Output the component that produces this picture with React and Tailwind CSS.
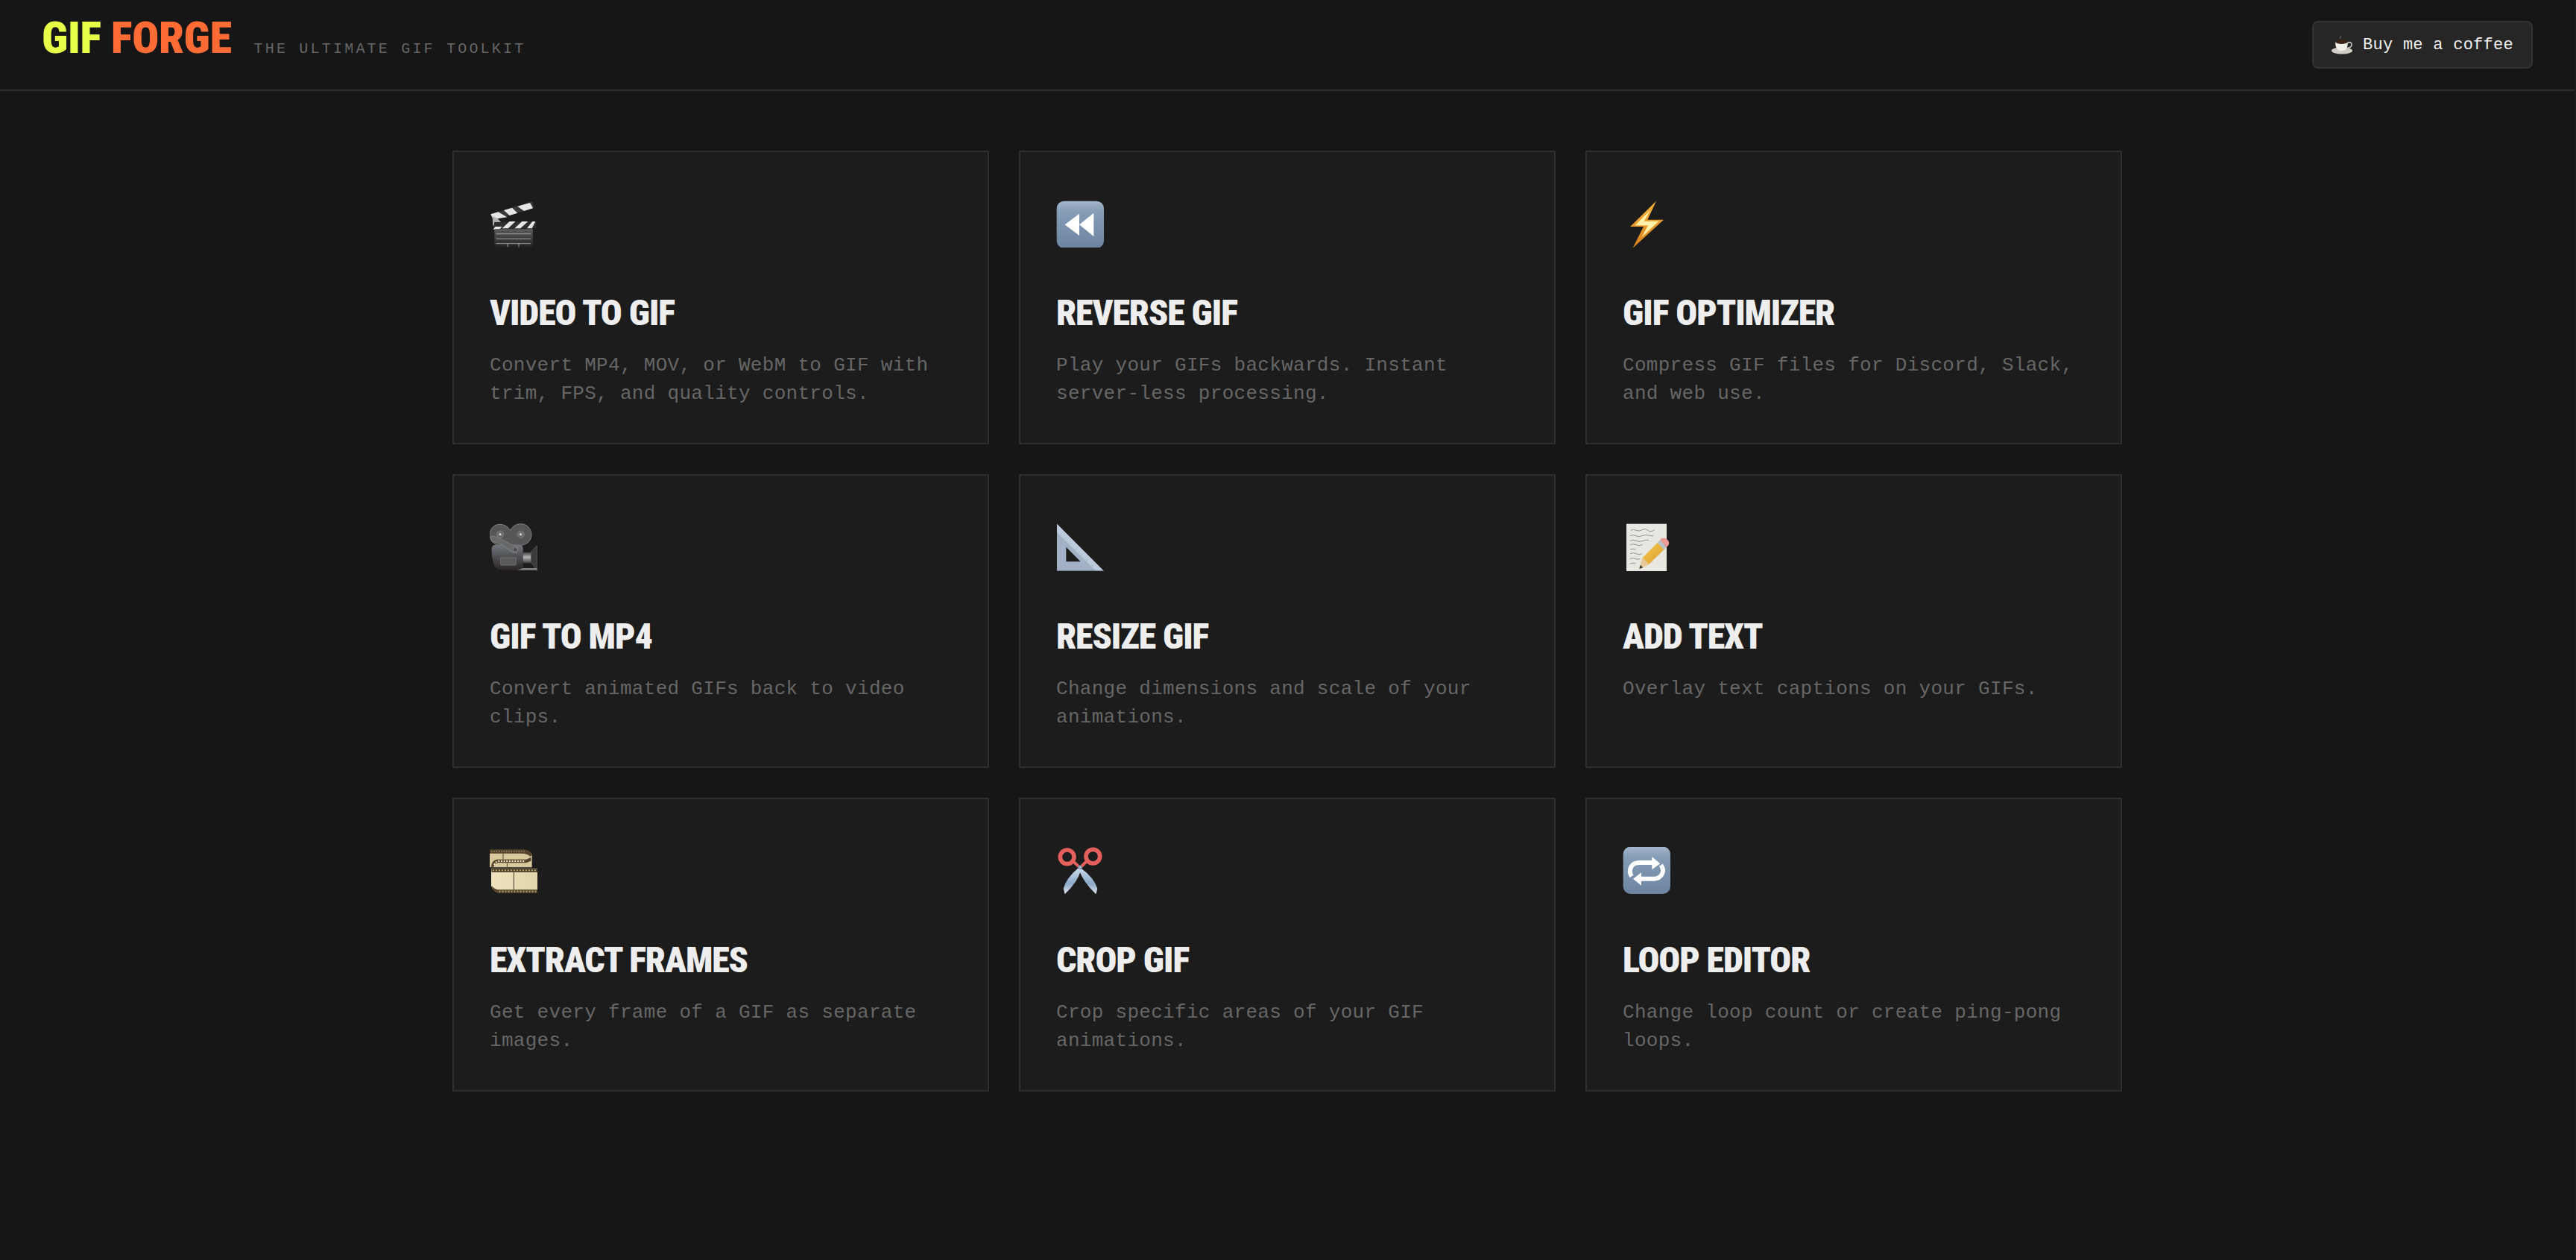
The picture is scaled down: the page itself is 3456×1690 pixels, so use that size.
const display = "font-['Roboto','Open_Sans',sans-serif] font-black font-stretch-condensed";
const mono = "font-['Liberation_Mono',monospace]";

function ClapperIcon() {
  return (
    <>
      <defs>
        <linearGradient id="clapBody" x1="0" y1="0" x2="0" y2="1">
          <stop offset="0" stopColor="#5c5c5c" />
          <stop offset="1" stopColor="#1f1f1f" />
        </linearGradient>
      </defs>
      <path d="M82 108 L250 57 L256 82 L120 124 L92 145 Z" fill="#3a3a3a" />
      <path d="M82 108 L112 99 L148 120 L92 128 Z" fill="#e6e6e6" />
      <path d="M135 92 L168 82 L190 103 L158 113 Z M190 76 L240 62 L252 84 L216 95 Z" fill="#e6e6e6" />
      <path d="M90 115 L112 128 L134 150 L100 170 L90 150 Z" fill="#b0b0b0" />
      <path d="M97 140 L265 136 L266 165 L92 170 Z" fill="#2e2e2e" />
      <path d="M128 165 L158 137 L182 137 L152 165 Z M178 165 L208 137 L232 137 L202 165 Z M228 165 L250 137 L262 137 L248 165 Z M92 170 L100 158 L128 158 L118 168 Z" fill="#e6e6e6" />
      <path d="M97 168 H252 V228 Q252 242 238 242 H111 Q97 242 97 228 Z" fill="url(#clapBody)" />
      <path d="M104 187 H243 M104 207 H243 M104 226 H243 M150 226 V240 M195 226 V240" stroke="#b4b4b4" strokeWidth="2.5" fill="none" />
    </>
  );
}

function RewindIcon() {
  return (
    <>
      <defs>
        <linearGradient id="btnBlue" x1="0" y1="0" x2="0" y2="1">
          <stop offset="0" stopColor="#a3b6cb" />
          <stop offset="0.22" stopColor="#869db7" />
          <stop offset="1" stopColor="#6c84a1" />
        </linearGradient>
      </defs>
      <rect x="80" y="55" width="190" height="190" rx="30" fill="url(#btnBlue)" />
      <path d="M113 150 L171 106 V194 Z M171 150 L229 103 V197 Z" fill="#fff" />
    </>
  );
}

function BoltIcon() {
  return (
    <>
      <defs>
        <linearGradient id="boltFill" x1="0" y1="0" x2="0" y2="1">
          <stop offset="0" stopColor="#f5b13d" />
          <stop offset="1" stopColor="#d9821c" />
        </linearGradient>
      </defs>
      <path d="M213 55 L108 158 H162 L118 245 L243 130 H178 Z" fill="url(#boltFill)" />
      <path d="M189 92 L128 153 H180 L155 200 L223 136 H164 Z" fill="#fff2a8" />
    </>
  );
}

function CameraIcon() {
  return (
    <>
      <defs>
        <linearGradient id="camBody" x1="0" y1="0" x2="0" y2="1">
          <stop offset="0" stopColor="#70767c" />
          <stop offset="1" stopColor="#2b2527" />
        </linearGradient>
        <linearGradient id="camLens" x1="0" y1="0" x2="0" y2="1">
          <stop offset="0" stopColor="#3a3a3a" />
          <stop offset="0.45" stopColor="#b5b5b5" />
          <stop offset="1" stopColor="#3a3a3a" />
        </linearGradient>
      </defs>
      <path d="M118 54 C142 54 155 68 160 78 C166 66 182 52 203 52 C228 52 246 72 246 96 C246 118 228 138 200 138 H120 C96 138 78 118 78 96 C78 72 96 54 118 54 Z" fill="#565656" stroke="#8e8e8e" strokeWidth="2.5" />
      <circle cx="120" cy="94" r="14" fill="#6a6a6a" stroke="#8a8a8a" strokeWidth="2" />
      <circle cx="120" cy="94" r="5" fill="#cfcfcf" />
      <circle cx="203" cy="94" r="14" fill="#6a6a6a" stroke="#8a8a8a" strokeWidth="2" />
      <circle cx="203" cy="94" r="5" fill="#cfcfcf" />
      <path d="M100 136 H196 Q212 136 212 152 V226 Q212 238 198 238 H125 Q100 238 93 212 Q84 178 86 150 Q88 136 100 136 Z" fill="url(#camBody)" />
      <path d="M82 104 L92 100 L130 116 L192 148 L186 168 L170 166 L118 130 L86 122 Z" fill="#68696b" stroke="#9a9a9a" strokeWidth="1.5" />
      <circle cx="181" cy="156" r="9" fill="#4a4a4a" stroke="#999" strokeWidth="2" />
      <rect x="122" y="188" width="62" height="30" rx="3" fill="#5a5a5a" stroke="#7e7e7e" strokeWidth="2" />
      <rect x="212" y="166" width="32" height="44" fill="url(#camLens)" />
      <path d="M244 164 L268 140 V240 L244 206 Z" fill="#3b3b3b" stroke="#777" strokeWidth="1.5" />
      <path d="M190 238 H268 V230 L212 230 Z" fill="#808080" />
    </>
  );
}

function RulerIcon() {
  return (
    <>
      <path fillRule="evenodd" d="M81 52 L269 241 H81 Z M118 145 V204 H176 Z" fill="#a2b1c6" />
      <path d="M81 52 L269 241 H238 L81 86 Z" fill="#bccadc" />
      <path d="M81 240 H269" stroke="#6d7788" strokeWidth="2.5" />
      <path d="M118 106 L112 112 M140 128 L134 134 M162 150 L156 156 M184 172 L178 178 M206 194 L200 200 M228 216 L222 222" stroke="#8fa0b8" strokeWidth="2" />
    </>
  );
}

function MemoIcon() {
  return (
    <>
      <defs>
        <linearGradient id="pencil" x1="0" y1="0" x2="1" y2="1">
          <stop offset="0" stopColor="#f6cd55" />
          <stop offset="1" stopColor="#d99a25" />
        </linearGradient>
      </defs>
      <rect x="93" y="52" width="162" height="190" fill="#e8e7e2" />
      <path d="M110 78 q12 -6 22 0 t24 -2 t24 2 t26 -2 M108 100 q14 -6 24 0 t24 0 t26 -2 t20 2 M108 120 q14 -6 24 0 t28 0 t24 -2 M108 136 q14 -6 24 0 t26 0 M108 155 q12 -5 22 0 M108 172 q14 -6 24 0 t24 0 M106 192 q12 -6 22 0 t20 0 M108 212 q10 -5 22 0" stroke="#666" strokeWidth="2" fill="none" />
      <path d="M145 233 L158 188 L228 118 L254 146 L184 214 Z" fill="url(#pencil)" />
      <path d="M145 233 L158 188 L184 214 Z" fill="#e8c89a" />
      <path d="M145 233 L149 218 L160 228 Z" fill="#333" />
      <path d="M218 128 L232 114 L258 140 L244 156 Z" fill="#b8c2c8" />
      <path d="M228 116 Q240 104 254 112 Q270 124 262 138 L254 146 Z" fill="#eb9a94" />
    </>
  );
}

function FilmIcon() {
  return (
    <>
      <defs>
        <linearGradient id="film" x1="0" y1="0" x2="1" y2="0">
          <stop offset="0" stopColor="#efe3bf" />
          <stop offset="1" stopColor="#e2d4ab" />
        </linearGradient>
      </defs>
      <path d="M78 62 H215 Q246 66 248 84 V132 H78 Z" fill="#d9c99d" />
      <path d="M78 60 H215 Q246 64 248 84 L240 88 Q230 76 205 76 H78 Z" fill="#54442b" />
      <path d="M84 68 H222" stroke="#c9b88a" strokeWidth="3" strokeDasharray="4 6" />
      <path d="M132 76 V100" stroke="#5a4a2e" strokeWidth="3" />
      <path d="M84 132 Q84 104 108 100 H225 L244 92 V106 L225 114 H112 Q96 116 92 134 Z" fill="#54442b" />
      <path d="M96 122 Q100 110 114 107 H222" stroke="#f0e6c6" strokeWidth="6" strokeDasharray="6 5" fill="none" />
      <path d="M148 114 V136" stroke="#5a4a2e" strokeWidth="3" />
      <path d="M84 136 H270 V236 H120 Q92 232 84 206 Z" fill="url(#film)" />
      <path d="M84 136 H270 V152 H86 Z M88 208 Q98 222 120 222 H270 V236 H120 Q94 234 86 210 Z" fill="#54442b" />
      <path d="M90 144 H268 M116 229 H268" stroke="#c9b88a" strokeWidth="5" strokeDasharray="5 7" />
      <path d="M175 152 V222" stroke="#4a3d26" strokeWidth="3" />
    </>
  );
}

function ScissorsIcon() {
  return (
    <>
      <defs>
        <linearGradient id="blade" x1="0" y1="0" x2="0" y2="1">
          <stop offset="0" stopColor="#cfe0f0" />
          <stop offset="0.6" stopColor="#8aa8c8" />
          <stop offset="1" stopColor="#e3e8ee" />
        </linearGradient>
      </defs>
      <path d="M168 134 Q118 175 107 218 L113 240 Q165 190 178 142 Z" fill="url(#blade)" />
      <path d="M176 134 Q232 175 244 218 L238 240 Q186 190 170 142 Z" fill="url(#blade)" />
      <circle cx="122" cy="90" r="28" fill="none" stroke="#e5605d" strokeWidth="17" />
      <circle cx="226" cy="88" r="28" fill="none" stroke="#e5605d" strokeWidth="17" />
      <path d="M146 108 L168 128 M202 106 L180 128" stroke="#e5605d" strokeWidth="12" />
      <circle cx="174" cy="132" r="8" fill="#9fb2c6" stroke="#5f6c7a" strokeWidth="2" />
    </>
  );
}

function LoopIcon() {
  return (
    <>
      <defs>
        <linearGradient id="btnBlue2" x1="0" y1="0" x2="0" y2="1">
          <stop offset="0" stopColor="#a3b6cb" />
          <stop offset="0.22" stopColor="#869db7" />
          <stop offset="1" stopColor="#6c84a1" />
        </linearGradient>
      </defs>
      <rect x="80" y="49" width="190" height="190" rx="30" fill="url(#btnBlue2)" />
      <path d="M114 168 Q102 150 112 130 Q122 113 146 113 H204" fill="none" stroke="#fff" strokeWidth="18" />
      <path d="M196 90 L229 117 L196 141 Z" fill="#fff" />
      <path d="M232 123 Q246 142 236 160 Q226 178 204 178 H146" fill="none" stroke="#fff" strokeWidth="18" />
      <path d="M153 153 L120 178 L153 205 Z" fill="#fff" />
    </>
  );
}

const tools = [
  { Icon: ClapperIcon, title: "VIDEO TO GIF", desc: "Convert MP4, MOV, or WebM to GIF with trim, FPS, and quality controls." },
  { Icon: RewindIcon, title: "REVERSE GIF", desc: "Play your GIFs backwards. Instant server-less processing." },
  { Icon: BoltIcon, title: "GIF OPTIMIZER", desc: "Compress GIF files for Discord, Slack, and web use." },
  { Icon: CameraIcon, title: "GIF TO MP4", desc: "Convert animated GIFs back to video clips." },
  { Icon: RulerIcon, title: "RESIZE GIF", desc: "Change dimensions and scale of your animations." },
  { Icon: MemoIcon, title: "ADD TEXT", desc: "Overlay text captions on your GIFs." },
  { Icon: FilmIcon, title: "EXTRACT FRAMES", desc: "Get every frame of a GIF as separate images." },
  { Icon: ScissorsIcon, title: "CROP GIF", desc: "Crop specific areas of your GIF animations." },
  { Icon: LoopIcon, title: "LOOP EDITOR", desc: "Change loop count or create ping-pong loops." },
];

function ToolCard({ Icon, title, desc }) {
  return (
    <div className="h-[394px] border-2 border-[#2e2e2e] bg-[#1c1c1c] px-[48px] pt-[64px]">
      <svg viewBox="78 50 192 192" className="block h-[64px] w-[64px]">
        <Icon />
      </svg>
      <h2 className={`mt-[56px] text-[48px] leading-[64px] tracking-[-1.1px] text-[#eeeeee] ${display}`}>{title}</h2>
      <p className={`mt-[19px] text-[26px] leading-[38px] tracking-[0.3px] text-[#666666] ${mono}`}>{desc}</p>
    </div>
  );
}

function CoffeeIcon() {
  return (
    <svg viewBox="0 0 30 26" className="h-[26px] w-[30px] shrink-0">
      <ellipse cx="14" cy="21" rx="14" ry="4.5" fill="#cfcdc6" />
      <path d="M5 9 H22 Q22 19 16 21 H11 Q5 19 5 9 Z" fill="#f2f0ea" />
      <ellipse cx="13.5" cy="9" rx="8.5" ry="3" fill="#3a2417" />
      <path d="M22 10 Q28 9 27 14 Q25 18 20 17" fill="none" stroke="#d8d6cf" strokeWidth="1.5" />
      <path d="M12 5 Q10 3 13 1" fill="none" stroke="#6b6b6b" strokeWidth="1" />
    </svg>
  );
}

export default function App() {
  return (
    <div className="min-h-[1690px] border-r-2 border-[#1c1c1c] bg-[#161616]">
      <header className="flex h-[122px] items-center justify-between border-b-2 border-[#2e2e2e] px-[56px]">
        <div className="flex items-baseline gap-[30px] pb-[18px]">
          <h1 className={`text-[60px] leading-none tracking-[-0.4px] ${display}`}>
            <span className="text-[#e8ff47]">GIF</span> <span className="text-[#ff6b35]">FORGE</span>
          </h1>
          <span className={`text-[20px] tracking-[3.2px] text-[#666666] ${mono}`}>THE ULTIMATE GIF TOOLKIT</span>
        </div>
        <button className={`flex h-[64px] w-[296px] items-center justify-center gap-[12px] rounded-[8px] border-2 border-[#333333] bg-[#262626] text-[22px] tracking-[0.26px] text-[#f0f0f0] ${mono}`}>
          <CoffeeIcon />
          Buy me a coffee
        </button>
      </header>
      <main className="mx-auto grid w-[2240px] grid-cols-3 gap-[40px] pt-[80px]">
        {tools.map((tool) => (
          <ToolCard key={tool.title} {...tool} />
        ))}
      </main>
    </div>
  );
}
